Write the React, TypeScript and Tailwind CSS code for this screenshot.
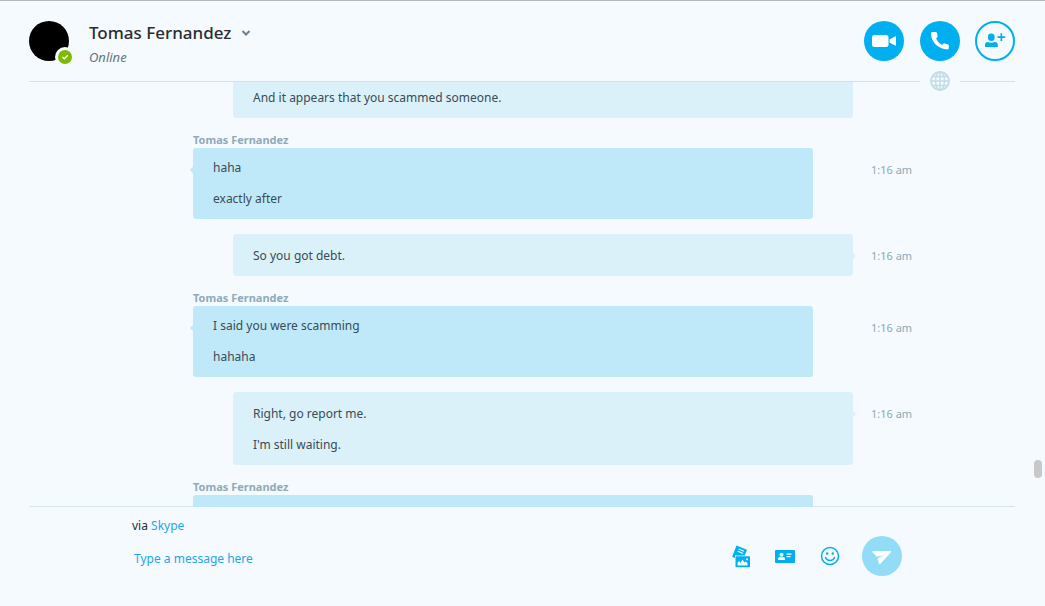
import { type ReactNode } from "react";

interface Message {
  id: number;
  author?: string;
  lines: string[];
  time?: string;
}

const messages: Message[] = [
  { id: 1, lines: ["And it appears that you scammed someone."] },
  { id: 2, author: "Tomas Fernandez", lines: ["haha", "exactly after"], time: "1:16 am" },
  { id: 3, lines: ["So you got debt."], time: "1:16 am" },
  { id: 4, author: "Tomas Fernandez", lines: ["I said you were scamming", "hahaha"], time: "1:16 am" },
  { id: 5, lines: ["Right, go report me.", "I'm still waiting."], time: "1:16 am" },
  { id: 6, author: "Tomas Fernandez", lines: [""] },
];

function VideoIcon() {
  return (
    <svg viewBox="0 0 40 40" className="size-10" fill="currentColor" aria-hidden="true">
      <rect x="8" y="14" width="16.5" height="12" rx="2.5" />
      <path d="M25.5 18.5 31 15.4q1-.4 1 .6v8q0 1-1 .6l-5.5-3.1z" />
    </svg>
  );
}

function PhoneIcon() {
  return (
    <svg viewBox="0 0 40 40" className="size-10" fill="currentColor" aria-hidden="true">
      <path d="M12.5 11h3c.8 0 1.3.4 1.4 1.1l.7 3.2c.1.7-.1 1.1-.6 1.5l-.9.7c1.1 2.7 3.2 5 6.1 6.3l.8-.9c.4-.5.9-.7 1.5-.5l3.2.8c.7.1 1.1.6 1.1 1.3V27c0 .9-.5 1.4-1.4 1.4C18.5 28.4 11 21 11 12.5c0-.9.6-1.5 1.5-1.5z" />
    </svg>
  );
}

function AddPersonIcon() {
  return (
    <svg viewBox="0 0 40 40" className="size-10" fill="currentColor" aria-hidden="true">
      <circle cx="20" cy="20" r="19" fill="none" stroke="currentColor" strokeWidth="2" />
      <rect x="13" y="12.5" width="6.6" height="7.5" rx="3.2" />
      <path d="M10 26v-2.3c0-1.7 1.2-2.7 3-2.7 2 .9 4.8.9 6.8 0 1.8 0 3 1 3 2.7V26z" />
      <path d="M22.5 15.3h3v-3h1.7v3h3V17h-3v3h-1.7v-3h-3z" />
    </svg>
  );
}

function GlobeIcon() {
  return (
    <svg viewBox="0 0 20 20" className="size-5" fill="none" stroke="currentColor" strokeWidth="1.5" aria-hidden="true">
      <circle cx="10" cy="10" r="9" strokeWidth="2" />
      <ellipse cx="10" cy="10" rx="4.5" ry="9" />
      <path d="M10 1v18M1 10h18M2.5 5.5h15M2.5 14.5h15" />
    </svg>
  );
}

function FilesIcon() {
  return (
    <svg viewBox="0 0 18 24" className="h-6 w-[18px]" fill="currentColor" aria-hidden="true">
      <path d="M4.5 1.5 15 5.8 12.5 12H3.5v2.2L.2 12.8z" />
      <path d="M6.5 5l5.5 2.3M5.7 7.2l5.5 2.3" fill="none" stroke="#f4fafd" strokeWidth="1.1" />
      <rect x="3" y="11.5" width="15" height="12" fill="#f4fafd" />
      <rect x="3.5" y="12.2" width="14.5" height="11" rx=".8" />
      <path d="M5.5 21.5v-3l1.7-1.5 1.3 2 2-3.5 2 3 1.2-1 1.8 1.500v2.500z" fill="#f4fafd" />
      <circle cx="15" cy="15.3" r="1.1" fill="#f4fafd" />
    </svg>
  );
}

function ContactCardIcon() {
  return (
    <svg viewBox="0 0 20 13" className="h-[13px] w-5" fill="currentColor" aria-hidden="true">
      <rect width="20" height="13" rx="1" />
      <g fill="#f4fafd">
        <circle cx="6.5" cy="4.7" r="2" />
        <path d="M3 10V8.8q0-1.7 1.7-1.9 1.8.9 3.6 0Q10 7.1 10 8.8V10z" />
        <path d="M11.500 3.500h5v1.200h-5zM11.500 6h4v1.200h-4z" />
      </g>
    </svg>
  );
}

function SmileIcon() {
  return (
    <svg viewBox="0 0 20 20" className="size-5" fill="none" stroke="currentColor" strokeWidth="1.5" strokeLinecap="round" aria-hidden="true">
      <circle cx="10" cy="10" r="8.5" />
      <path d="M5.5 11.5q1.3 3 4.5 3t4.5-3" />
      <circle cx="7.2" cy="7.5" r="1.2" fill="currentColor" stroke="none" />
      <circle cx="12.8" cy="7.5" r="1.2" fill="currentColor" stroke="none" />
    </svg>
  );
}

function SendIcon() {
  return (
    <svg viewBox="0 0 40 40" className="size-10" fill="currentColor" aria-hidden="true">
      <path d="M10.8 15h17.7q1.2 0 .6 1.1L18.3 27.9q-1.1 1-1.5-.4l-1.1-5.3 6-2.8-7 1.2-4.3-4.3q-.7-1.1.4-1.3z" />
    </svg>
  );
}

function RoundButton({ label, className, children }: { label: string; className: string; children: ReactNode }) {
  return (
    <button type="button" aria-label={label} className={`size-10 shrink-0 rounded-full ${className}`}>
      {children}
    </button>
  );
}

function Header() {
  return (
    <header className="flex h-20 shrink-0 items-start justify-between pt-5 pr-[30px] pl-[29px]">
      <div className="flex gap-5">
        <div className="relative size-10 rounded-full bg-black">
          <span className="absolute -right-[3px] -bottom-[3px] flex size-3.5 items-center justify-center rounded-full bg-[#7fba00] ring-3 ring-[#f4fafd]">
            <svg viewBox="0 0 8 8" className="size-2" fill="none" stroke="white" strokeWidth="1.5" aria-hidden="true">
              <path d="M1.5 4l1.8 1.8L6.8 2.3" />
            </svg>
          </span>
        </div>
        <div>
          <button type="button" className="flex items-center gap-2.5 text-[17px] leading-6 font-medium text-[#2b2c33]">
            Tomas Fernandez
            <svg viewBox="0 0 10 6" className="h-1.5 w-2.5" fill="none" stroke="#6e7f8d" strokeWidth="2" aria-hidden="true">
              <path d="M1.5 1 5 4.5 8.5 1" />
            </svg>
          </button>
          <p className="text-[13px] leading-6 text-[#66757f] italic">Online</p>
        </div>
      </div>
      <div className="flex gap-[15px]">
        <div className="flex gap-4">
          <RoundButton label="Video call" className="bg-[#00aff0] text-white">
            <VideoIcon />
          </RoundButton>
          <RoundButton label="Call" className="bg-[#00aff0] text-white">
            <PhoneIcon />
          </RoundButton>
        </div>
        <RoundButton label="Add people" className="text-[#00aff0]">
          <AddPersonIcon />
        </RoundButton>
      </div>
    </header>
  );
}

function MessageRow({ message }: { message: Message }) {
  const incoming = Boolean(message.author);
  return (
    <li className="grid grid-cols-[193px_1fr_192px]">
      <div className="col-start-2">
        {incoming ? (
          <p className="pt-3.5 pb-px text-[11px] leading-[15px] font-bold text-[#8fabb9]">{message.author}</p>
        ) : (
          <div className="h-[15px]" />
        )}
        <div
          className={
            incoming
              ? "relative mr-10 rounded-[3px] bg-[#bfe9f9] px-5 pt-1 pb-[5px]"
              : "relative ml-10 rounded-[3px] bg-[#dbf1fa] px-5 pt-1.5 pb-[5px]"
          }
        >
          {message.time && (
            <span
              className={
                incoming
                  ? "absolute top-[19px] -left-0.5 size-1.5 rotate-45 bg-[#bfe9f9]"
                  : "absolute top-[19px] -right-0.5 size-1.5 rotate-45 bg-[#dbf1fa]"
              }
            />
          )}
          {message.lines.map((line) => (
            <p key={line} className="h-[31px] text-xs leading-[31px] text-[#3a4b55]">
              {line}
            </p>
          ))}
        </div>
      </div>
      {message.time && (
        <time className={`pl-[18px] text-[11px] leading-4 text-[#8fa9b5] ${incoming ? "pt-11" : "pt-[29px]"}`}>
          {message.time}
        </time>
      )}
    </li>
  );
}

function Composer() {
  return (
    <footer className="mr-[30px] ml-[29px] shrink-0 border-t border-[#d8e5ec] pt-2 pr-[113px] pb-[30px] pl-[103px]">
      <p className="text-xs leading-[21px] text-[#2b2c33]">
        via{" "}
        <a href="#skype" className="text-[#1da6ec]">
          Skype
        </a>
      </p>
      <form className="flex items-center" onSubmit={(e) => e.preventDefault()}>
        <input
          type="text"
          aria-label="Message"
          placeholder="Type a message here"
          className="h-10 min-w-0 flex-1 bg-transparent pt-1 pl-0.5 text-xs text-[#2b2c33] outline-none placeholder:text-[#1da6ec]"
        />
        <div className="flex items-center gap-[25px] pr-[22px] text-[#00aff0]">
          <button type="button" aria-label="Send files">
            <FilesIcon />
          </button>
          <button type="button" aria-label="Send contacts">
            <ContactCardIcon />
          </button>
          <button type="button" aria-label="Insert emoticon">
            <SmileIcon />
          </button>
        </div>
        <RoundButton label="Send message" className="bg-[#93dcf8] text-white">
          <SendIcon />
        </RoundButton>
      </form>
    </footer>
  );
}

export default function App() {
  return (
    <div className="flex h-screen flex-col border-t border-[#b5b5bd] bg-[#f4fafd] font-['Noto_Sans',sans-serif]">
      <Header />
      <main className="relative min-h-0 flex-1">
        <div className="mr-[30px] ml-[29px] h-px bg-[#d8e0e5]" />
        <span className="absolute -top-[10px] right-[85px] flex w-10 justify-center bg-[#f4fafd] text-[#c3dce8]">
          <GlobeIcon />
        </span>
        <div className="h-full overflow-hidden">
          <ul className="-mt-[21px]">
            {messages.map((message) => (
              <MessageRow key={message.id} message={message} />
            ))}
          </ul>
        </div>
        <span className="absolute right-[3px] bottom-7 h-[18px] w-2 rounded-full bg-[#c6c8ca]" />
      </main>
      <Composer />
    </div>
  );
}
